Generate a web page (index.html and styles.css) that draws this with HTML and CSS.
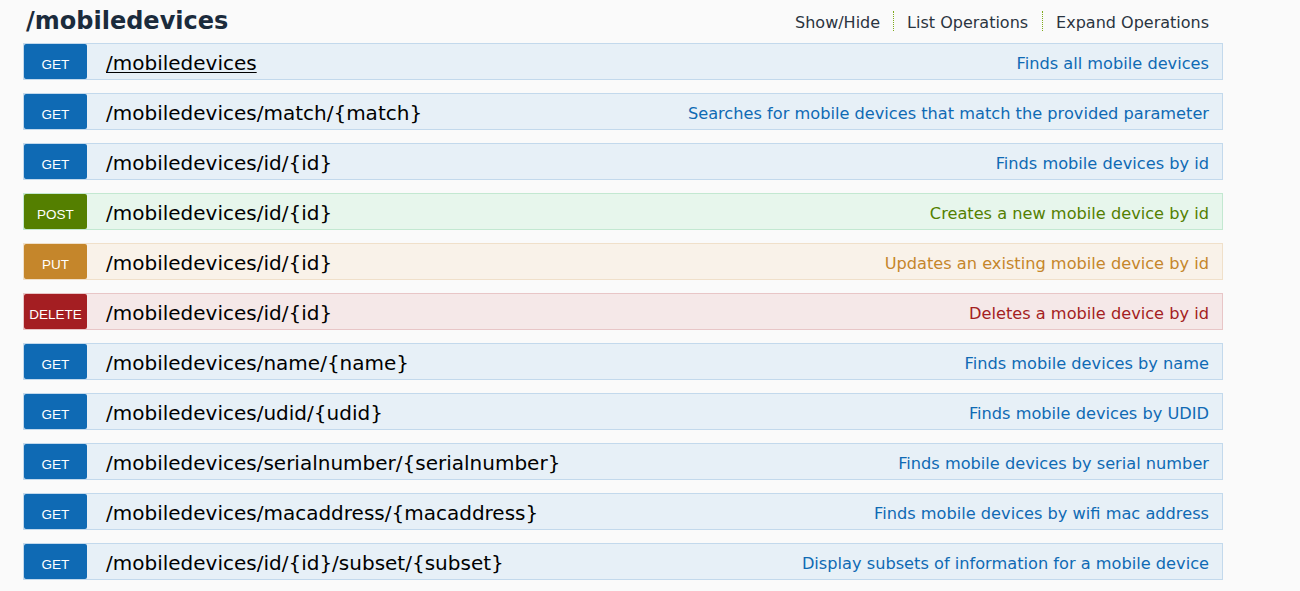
FILE: index.html
```html
<!DOCTYPE html>
<html>
<head>
<meta charset="utf-8">
<link rel="stylesheet" href="styles.css">
</head>
<body>
<div class="resource">
  <div class="heading">
    <h2 class="title">/mobiledevices</h2>
    <ul class="options">
      <li>Show/Hide</li>
      <li>List Operations</li>
      <li class="last">Expand Operations</li>
    </ul>
  </div>
  <ul class="ops">
    <li class="op get"><span class="verb">GET</span><span class="path hover">/mobiledevices</span><span class="desc">Finds all mobile devices</span></li>
    <li class="op get"><span class="verb">GET</span><span class="path">/mobiledevices/match/{match}</span><span class="desc">Searches for mobile devices that match the provided parameter</span></li>
    <li class="op get"><span class="verb">GET</span><span class="path">/mobiledevices/id/{id}</span><span class="desc">Finds mobile devices by id</span></li>
    <li class="op post"><span class="verb">POST</span><span class="path">/mobiledevices/id/{id}</span><span class="desc">Creates a new mobile device by id</span></li>
    <li class="op put"><span class="verb">PUT</span><span class="path">/mobiledevices/id/{id}</span><span class="desc">Updates an existing mobile device by id</span></li>
    <li class="op delete"><span class="verb">DELETE</span><span class="path">/mobiledevices/id/{id}</span><span class="desc">Deletes a mobile device by id</span></li>
    <li class="op get"><span class="verb">GET</span><span class="path">/mobiledevices/name/{name}</span><span class="desc">Finds mobile devices by name</span></li>
    <li class="op get"><span class="verb">GET</span><span class="path">/mobiledevices/udid/{udid}</span><span class="desc">Finds mobile devices by UDID</span></li>
    <li class="op get"><span class="verb">GET</span><span class="path">/mobiledevices/serialnumber/{serialnumber}</span><span class="desc">Finds mobile devices by serial number</span></li>
    <li class="op get"><span class="verb">GET</span><span class="path">/mobiledevices/macaddress/{macaddress}</span><span class="desc">Finds mobile devices by wifi mac address</span></li>
    <li class="op get"><span class="verb">GET</span><span class="path">/mobiledevices/id/{id}/subset/{subset}</span><span class="desc">Display subsets of information for a mobile device</span></li>
  </ul>
</div>
</body>
</html>
```

FILE: styles.css
```css
html, body {
  margin: 0;
  padding: 0;
  background: #fafafa;
  font-family: "DejaVu Sans", Verdana, sans-serif;
  height: 591px;
  overflow: hidden;
}

.resource {
  margin-left: 23px;
  width: 1200px;
}

.heading {
  display: flex;
  align-items: flex-start;
  justify-content: space-between;
  height: 43px;
  box-sizing: border-box;
  padding-top: 7px;
  padding-left: 3px;
}

.title {
  margin: 0;
  font-size: 24px;
  font-weight: bold;
  color: #1b2b3c;
}

.options {
  display: flex;
  align-items: flex-start;
  list-style: none;
  margin: 4px 0 0 0;
  padding: 0 14px 0 0;
}

.options li {
  font-size: 16px;
  line-height: 16px;
  padding: 4px 13px 0 13px;
  color: #2a3440;
  border-right: 1px dotted #7faa1c;
}

.options li:nth-child(2) {
  padding-right: 14px;
}

.options li.last {
  border-right: none;
  padding-right: 0;
}

.ops {
  list-style: none;
  margin: 0;
  padding: 0;
}

.op {
  display: flex;
  align-items: center;
  height: 37px;
  box-sizing: border-box;
  border: 1px solid;
  margin-bottom: 13px;
}

.verb {
  flex: none;
  width: 63px;
  height: 35px;
  box-sizing: border-box;
  padding-top: 5px;
  display: flex;
  align-items: center;
  justify-content: center;
  border-radius: 2px;
  color: #fff;
  font-family: "Liberation Sans", Arial, sans-serif;
  font-size: 13.5px;
}

.path {
  margin-left: 19px;
  padding-top: 3px;
  font-size: 20px;
  color: #000;
}

.path.hover {
  text-decoration: underline;
  text-underline-offset: 2px;
  text-decoration-thickness: 1px;
}

.desc {
  margin-left: auto;
  padding-right: 13px;
  padding-top: 4px;
  font-size: 16.2px;
}

.get { background: #e7f0f7; border-color: #c3d9ec; }
.get .verb { background: #0f6ab4; }
.get .desc { color: #0f6ab4; }

.post { background: #e7f6ec; border-color: #c3e8d1; }
.post .verb { background: #547f00; }
.post .desc { color: #547f00; }

.put { background: #f9f2e9; border-color: #f0e0ca; }
.put .verb { background: #c5862b; }
.put .desc { color: #c5862b; }

.delete { background: #f5e8e8; border-color: #e8c6c7; }
.delete .verb { background: #a41e22; }
.delete .desc { color: #a41e22; }
```
